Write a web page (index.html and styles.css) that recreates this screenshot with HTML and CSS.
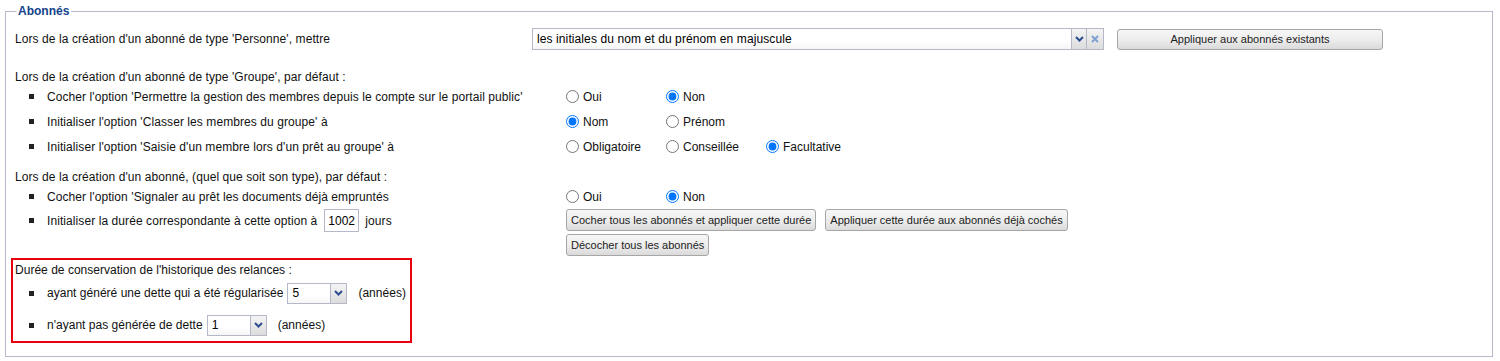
FILE: index.html
```html
<!DOCTYPE html>
<html lang="fr">
<head>
    <meta charset="UTF-8">
    <title>Paramètres | Abonnés</title>
    <link rel="stylesheet" href="styles.css">
</head>
<body>
    <!-- Abonnés panel -->
    <fieldset class="panel">
        <legend>Abonnés</legend>

        <div class="row-first">
            <span class="first-label">Lors de la création d'un abonné de type 'Personne', mettre</span>
            <div class="combo wide-combo">
                <input class="combo-input" type="text" value="les initiales du nom et du prénom en majuscule">
                <span class="trigger"><svg width="9" height="6" viewBox="0 0 9 6"><path d="M1 1 L4.5 4.5 L8 1" fill="none" stroke="#2d4f8f" stroke-width="2"/></svg></span>
                <span class="trigger clear"><svg width="8" height="8" viewBox="0 0 8 8"><path d="M1 1 L7 7 M7 1 L1 7" stroke="#7d9fd3" stroke-width="1.8"/></svg></span>
            </div>
            <button class="btn apply-all">Appliquer aux abonnés existants</button>
        </div>

        <!-- Groupe -->
        <p class="intro intro-group">Lors de la création d'un abonné de type 'Groupe', par défaut :</p>
        <ul class="opts">
            <li>
                <span class="opt-label">Cocher l'option 'Permettre la gestion des membres depuis le compte sur le portail public'</span>
                <div class="radios">
                    <label><input type="radio" name="gestion">Oui</label>
                    <label><input type="radio" name="gestion" checked>Non</label>
                </div>
            </li>
            <li>
                <span class="opt-label">Initialiser l'option 'Classer les membres du groupe' à</span>
                <div class="radios">
                    <label><input type="radio" name="classer" checked>Nom</label>
                    <label><input type="radio" name="classer">Prénom</label>
                </div>
            </li>
            <li>
                <span class="opt-label">Initialiser l'option 'Saisie d'un membre lors d'un prêt au groupe' à</span>
                <div class="radios">
                    <label><input type="radio" name="saisie">Obligatoire</label>
                    <label><input type="radio" name="saisie">Conseillée</label>
                    <label><input type="radio" name="saisie" checked>Facultative</label>
                </div>
            </li>
        </ul>

        <!-- Tous types -->
        <p class="intro intro-all">Lors de la création d'un abonné, (quel que soit son type), par défaut :</p>
        <ul class="opts">
            <li>
                <span class="opt-label">Cocher l'option 'Signaler au prêt les documents déjà empruntés</span>
                <div class="radios">
                    <label><input type="radio" name="signaler">Oui</label>
                    <label><input type="radio" name="signaler" checked>Non</label>
                </div>
            </li>
            <li class="top">
                <span class="opt-label duree">Initialiser la durée correspondante à cette option à
                    <input class="days" type="text" value="1002"> jours</span>
                <div class="actions">
                    <div class="actions-line">
                        <button class="btn">Cocher tous les abonnés et appliquer cette durée</button>
                        <button class="btn">Appliquer cette durée aux abonnés déjà cochés</button>
                    </div>
                    <div class="actions-line">
                        <button class="btn">Décocher tous les abonnés</button>
                    </div>
                </div>
            </li>
        </ul>

        <!-- Relances -->
        <div class="relances">
            <p class="intro">Durée de conservation de l'historique des relances :</p>
            <ul class="opts">
                <li>
                    <span>ayant généré une dette qui a été régularisée</span>
                    <div class="combo small-combo">
                        <input class="combo-input" type="text" value="5">
                        <span class="trigger"><svg width="9" height="6" viewBox="0 0 9 6"><path d="M1 1 L4.5 4.5 L8 1" fill="none" stroke="#2d4f8f" stroke-width="2"/></svg></span>
                    </div>
                    <span class="unit">(années)</span>
                </li>
                <li>
                    <span>n'ayant pas générée de dette</span>
                    <div class="combo small-combo">
                        <input class="combo-input" type="text" value="1">
                        <span class="trigger"><svg width="9" height="6" viewBox="0 0 9 6"><path d="M1 1 L4.5 4.5 L8 1" fill="none" stroke="#2d4f8f" stroke-width="2"/></svg></span>
                    </div>
                    <span class="unit">(années)</span>
                </li>
            </ul>
        </div>
    </fieldset>
</body>
</html>
```

FILE: styles.css
```css
/* General Styles */
body {
    font-family: "Liberation Sans", Arial, sans-serif;
    font-size: 12px;
    letter-spacing: 0.08px;
    color: #111;
    background-color: #fff;
    margin: 0;
}

/* Panel */
.panel {
    margin: 4px 7px 0 5px;
    padding: 0 9px 13px 9px;
    border: 1px solid #b5b8c8;
}

.panel legend {
    margin-left: 1px;
    padding: 0 2px;
    font-weight: bold;
    font-size: 12px;
    line-height: 14px;
    letter-spacing: 0;
    color: #15428b;
}

/* First row */
.row-first {
    display: flex;
    align-items: center;
    height: 22px;
    margin-top: 10px;
}

.first-label {
    width: 517px;
}

/* Combo boxes */
.combo {
    display: flex;
    height: 22px;
}

.combo-input {
    box-sizing: border-box;
    height: 100%;
    margin: 0;
    padding: 0 4px;
    border: 1px solid #b5b8c8;
    border-right: none;
    background: linear-gradient(#fff, #fff 60%, #f6f6f6);
    font-family: "Liberation Sans", Arial, sans-serif;
    font-size: 12px;
    letter-spacing: 0.1px;
    color: #000;
    outline: none;
}

.wide-combo .combo-input {
    width: 539px;
}

.trigger {
    box-sizing: border-box;
    width: 16px;
    height: 100%;
    display: flex;
    align-items: center;
    justify-content: center;
    border: 1px solid #b5b8c8;
    background: linear-gradient(#f4f4f4, #dcdcdc);
}

.trigger.clear {
    width: 17px;
    border-left: none;
}

.small-combo {
    height: 21px;
    margin-left: 4px;
}

.small-combo .combo-input {
    width: 43px;
}

.small-combo .trigger {
    width: 17px;
}

/* Buttons */
.btn {
    box-sizing: border-box;
    height: 22px;
    padding: 0 4px;
    border: 1px solid #a6a6a6;
    border-radius: 3px;
    background: linear-gradient(#f7f7f7, #ececec 55%, #dadada);
    font-family: "Liberation Sans", Arial, sans-serif;
    font-size: 11px;
    letter-spacing: 0;
    color: #222;
    cursor: pointer;
}

.apply-all {
    width: 266px;
    height: 21px;
    margin-left: 13px;
}

/* Sections */
.intro {
    margin: 0;
    line-height: 14px;
}

.intro-group {
    margin-top: 20px;
}

.intro-all {
    margin-top: 11px;
}

.opts {
    list-style: none;
    margin: 0;
    padding: 0;
}

.opts li {
    display: flex;
    align-items: center;
    min-height: 25px;
    padding-left: 14px;
}

.opts li::before {
    content: "";
    width: 5px;
    height: 5px;
    margin-right: 13px;
    background-color: #222;
    flex-shrink: 0;
}

.opts li.top {
    align-items: flex-start;
}

.opts li.top::before {
    margin-top: 9px;
}

.opt-label {
    width: 519px;
}

.duree {
    display: flex;
    align-items: center;
    height: 23px;
}

.days {
    box-sizing: border-box;
    width: 35px;
    height: 23px;
    margin: 0 6px 0 7px;
    padding: 0 3px;
    border: 1px solid #b5b8c8;
    font-family: "Liberation Sans", Arial, sans-serif;
    font-size: 12px;
    color: #000;
}

/* Radios */
.radios {
    display: flex;
    letter-spacing: 0;
}

.radios label {
    width: 100px;
    display: flex;
    align-items: center;
}

.radios input {
    width: 13px;
    height: 13px;
    margin: 0 4px 0 0;
}

/* Action buttons */
.actions {
    display: flex;
    flex-direction: column;
    gap: 3px;
}

.actions-line {
    display: flex;
    gap: 9px;
}

/* Relances box */
.relances {
    width: fit-content;
    margin: 2px 0 0 -4px;
    padding: 3px 4px 0 2px;
    border: 2px solid #e8000d;
    letter-spacing: 0.02px;
}

.relances .opts li {
    min-height: 32px;
}

.unit {
    margin-left: 11px;
}
```
